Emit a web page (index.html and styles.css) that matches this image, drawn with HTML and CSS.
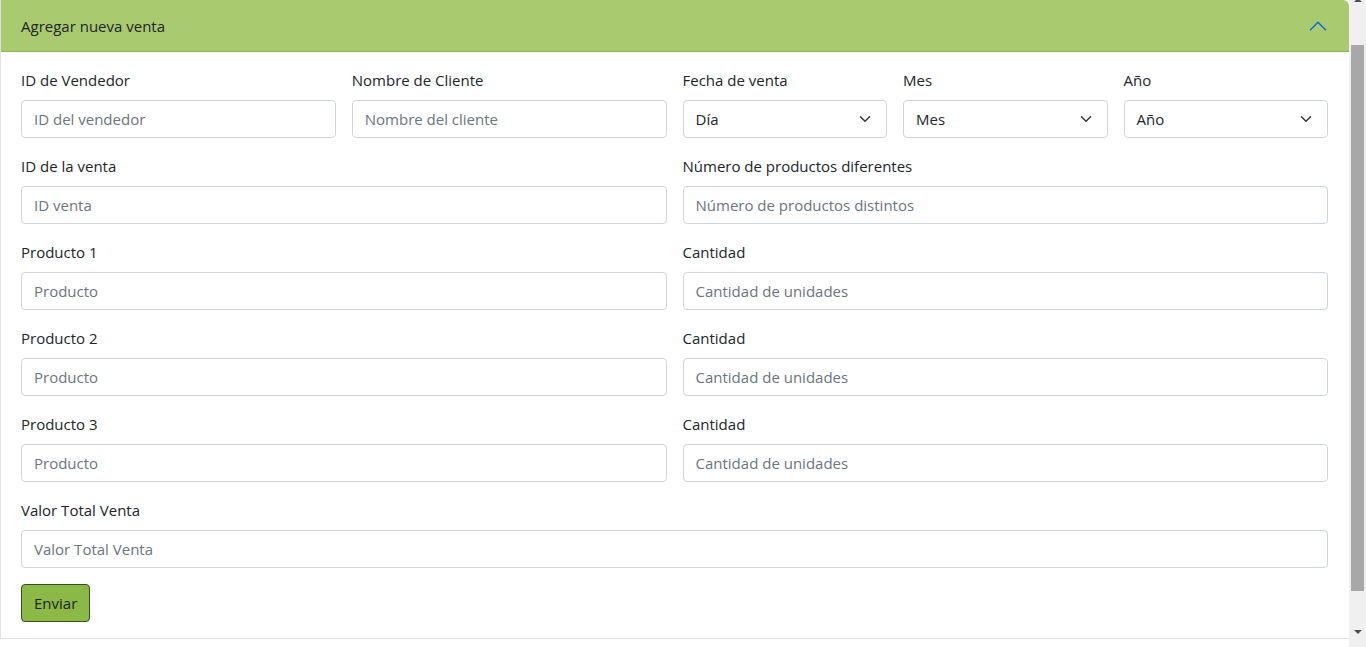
FILE: index.html
```html
<!DOCTYPE html>
<html lang="es">
<head>
<meta charset="utf-8">
<title>Agregar nueva venta</title>
<link rel="stylesheet" href="styles.css">
</head>
<body>
<div class="page">
  <main class="content">
    <section class="accordion-item">
      <div class="accordion-header">
        <span class="accordion-title">Agregar nueva venta</span>
        <svg class="chevron-up" width="20" height="20" viewBox="0 0 16 16" aria-hidden="true"><path fill="none" stroke="#0c63e4" stroke-width="1.1" stroke-linecap="round" stroke-linejoin="round" d="M2 11l6-6 6 6"/></svg>
      </div>
      <form class="accordion-body">
        <div class="row row-5">
          <div class="field">
            <label class="form-label">ID de Vendedor</label>
            <input class="form-control" type="text" placeholder="ID del vendedor">
          </div>
          <div class="field">
            <label class="form-label">Nombre de Cliente</label>
            <input class="form-control" type="text" placeholder="Nombre del cliente">
          </div>
          <div class="field">
            <label class="form-label">Fecha de venta</label>
            <div class="form-select"><span>Día</span><svg width="12" height="12" viewBox="0 0 16 16"><path fill="none" stroke="#343a40" stroke-width="2" stroke-linecap="round" stroke-linejoin="round" d="M2 5l6 6 6-6"/></svg></div>
          </div>
          <div class="field">
            <label class="form-label">Mes</label>
            <div class="form-select"><span>Mes</span><svg width="12" height="12" viewBox="0 0 16 16"><path fill="none" stroke="#343a40" stroke-width="2" stroke-linecap="round" stroke-linejoin="round" d="M2 5l6 6 6-6"/></svg></div>
          </div>
          <div class="field">
            <label class="form-label">Año</label>
            <div class="form-select"><span>Año</span><svg width="12" height="12" viewBox="0 0 16 16"><path fill="none" stroke="#343a40" stroke-width="2" stroke-linecap="round" stroke-linejoin="round" d="M2 5l6 6 6-6"/></svg></div>
          </div>
        </div>
        <div class="row row-2">
          <div class="field">
            <label class="form-label">ID de la venta</label>
            <input class="form-control" type="text" placeholder="ID venta">
          </div>
          <div class="field">
            <label class="form-label">Número de productos diferentes</label>
            <input class="form-control" type="text" placeholder="Número de productos distintos">
          </div>
        </div>
        <div class="row row-2">
          <div class="field">
            <label class="form-label">Producto 1</label>
            <input class="form-control" type="text" placeholder="Producto">
          </div>
          <div class="field">
            <label class="form-label">Cantidad</label>
            <input class="form-control" type="text" placeholder="Cantidad de unidades">
          </div>
        </div>
        <div class="row row-2">
          <div class="field">
            <label class="form-label">Producto 2</label>
            <input class="form-control" type="text" placeholder="Producto">
          </div>
          <div class="field">
            <label class="form-label">Cantidad</label>
            <input class="form-control" type="text" placeholder="Cantidad de unidades">
          </div>
        </div>
        <div class="row row-2">
          <div class="field">
            <label class="form-label">Producto 3</label>
            <input class="form-control" type="text" placeholder="Producto">
          </div>
          <div class="field">
            <label class="form-label">Cantidad</label>
            <input class="form-control" type="text" placeholder="Cantidad de unidades">
          </div>
        </div>
        <div class="row row-1">
          <div class="field">
            <label class="form-label">Valor Total Venta</label>
            <input class="form-control" type="text" placeholder="Valor Total Venta">
          </div>
        </div>
        <div class="actions">
          <button class="btn-submit" type="button">Enviar</button>
        </div>
      </form>
    </section>
  </main>
  <div class="scrollbar" aria-hidden="true">
    <div class="scroll-up"></div>
    <div class="scroll-track"><div class="scroll-thumb"></div></div>
    <div class="scroll-down"></div>
  </div>
</div>
</body>
</html>
```

FILE: styles.css
```css
* { box-sizing: border-box; }
html, body { margin: 0; padding: 0; height: 100%; overflow: hidden; background: #fff; }
body {
  font-family: "Open Sans", "Noto Sans", sans-serif;
  font-size: 16px;
  line-height: 24px;
  color: #212529;
}
.page { display: flex; height: 647px; }
.content { flex: 0 0 1349px; width: 1349px; overflow: hidden; }

.accordion-item {
  border-left: 1px solid #dee2e6;
  border-bottom: 1px solid #dee2e6;
  border-top-right-radius: 6px;
}
.accordion-header {
  display: flex;
  align-items: center;
  justify-content: space-between;
  height: 52px;
  padding: 1px 20px 0 20px;
  background: #aaca70;
  border-bottom: 1px solid #8fae5a;
  border-top-right-radius: 6px;
}
.accordion-title { font-size: 15px; }
.chevron-up { display: block; margin-right: 1px; }

.accordion-body { padding: 16px 21px 16px 20px; }
.row { display: grid; column-gap: 16px; margin-bottom: 16px; }
.row-5 {
  grid-template-columns:
    calc((100% + 16px) / 4 - 16px)
    calc((100% + 16px) / 4 - 16px)
    1fr 1fr 1fr;
}
.row-2 { grid-template-columns: 1fr 1fr; }
.row-1 { grid-template-columns: 1fr; }
.field { display: flex; flex-direction: column; min-width: 0; }
.form-label { display: block; margin: 0 0 8px 0; font-size: 15px; }
.form-control {
  display: block;
  width: 100%;
  height: 38px;
  padding: 6px 12px;
  font: inherit;
  font-size: 15px;
  color: #212529;
  background: #fff;
  border: 1px solid #ced4da;
  border-radius: 4px;
  outline: none;
}
.form-control::placeholder { color: #6c757d; opacity: 1; }
.form-select {
  display: flex;
  align-items: center;
  justify-content: space-between;
  height: 38px;
  padding: 6px 15px 6px 12px;
  font-size: 15px;
  border: 1px solid #ced4da;
  border-radius: 4px;
  background: #fff;
}
.form-select svg { display: block; }

.actions { display: flex; }
.btn-submit {
  height: 38px;
  padding: 6px 12px;
  font: inherit;
  font-size: 15px;
  color: #212529;
  background: #8cb845;
  border: 1px solid #33521a;
  border-radius: 4px;
}

.scrollbar {
  flex: 0 0 17px;
  width: 17px;
  height: 647px;
  background: #f0f0f0;
  display: flex;
  flex-direction: column;
}
.scroll-up {
  height: 6px;
  display: flex;
  justify-content: center;
}
.scroll-up::before {
  content: "";
  width: 0; height: 0;
  border-left: 4px solid transparent;
  border-right: 4px solid transparent;
  border-bottom: 4px solid #505050;
  margin-top: -2px;
}
.scroll-track { flex: 1; padding: 39px 2px 0 2px; }
.scroll-thumb { height: 546px; background: #a8a8a8; }
.scroll-down {
  height: 21px;
  display: flex;
  justify-content: center;
  padding-top: 4px;
}
.scroll-down::before {
  content: "";
  width: 0; height: 0;
  border-left: 4px solid transparent;
  border-right: 4px solid transparent;
  border-top: 4px solid #505050;
}
```
